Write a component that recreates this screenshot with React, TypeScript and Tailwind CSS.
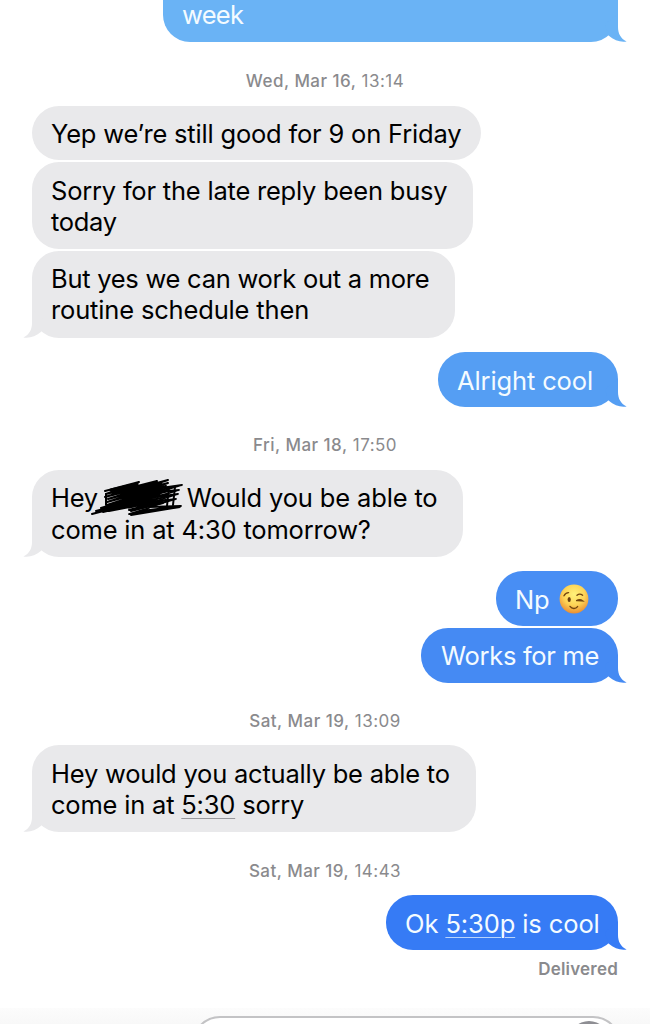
import { ReactNode } from 'react'
import clsx from 'clsx'

interface BubbleProps {
  sent?: boolean
  tail?: boolean
  className: string
  children: ReactNode
}

function Tail({ sent }: { sent?: boolean }) {
  return (
    <svg
      viewBox="0 0 30 28"
      className={clsx(
        'absolute bottom-0 h-[28px] w-[30px]',
        sent ? '-right-[9px]' : '-left-[9px] -scale-x-100'
      )}
    >
      <path
        d="M21 0V13C21 19.5 23.6 24.6 29.6 27.5C24 28.4 17.5 27 11.5 21.6L8 10Z"
        fill="currentColor"
      />
    </svg>
  )
}

function Bubble({ sent, tail, className, children }: BubbleProps) {
  return (
    <div
      className={clsx(
        'relative shrink-0 rounded-[27px] bg-current pl-[19px]',
        sent ? 'self-end' : 'self-start text-[#e9e9eb]',
        className
      )}
    >
      {tail && <Tail sent={sent} />}
      <div
        className={clsx(
          'relative whitespace-nowrap text-[25.5px] leading-[31.4px]',
          sent ? 'text-[#f4fbff]' : 'text-black'
        )}
      >
        {children}
      </div>
    </div>
  )
}

function Timestamp({ day, time, className }: { day: string; time: string; className: string }) {
  return (
    <div
      className={clsx(
        'shrink-0 text-center text-[17px] leading-[20px] tracking-[0.47px] text-[#8a8a8d]',
        className
      )}
    >
      <span className="font-medium">{day},</span> {time}
    </div>
  )
}

function Scribble() {
  return (
    <span className="relative inline-block h-[20px] w-[89px] align-baseline">
      <svg
        viewBox="0 0 96 42"
        className="absolute -left-[9px] -top-[5px] h-[42px] w-[96px]"
        fill="none"
        stroke="#000"
        strokeWidth="2"
        strokeLinecap="round"
        strokeLinejoin="round"
      >
        <path d="M16 14L50 5L17 17L68 4L16 20L79 3L19 22L79 6L18 25L77 9L18 28L79 11L12 31L79 14L7 34L78 17L3 37L30 30L14 35L76 20L20 34L77 23L40 33L74 26L42 34L66 28" />
        <path d="M22 13L48 7L24 17L62 7L32 20L72 7L38 23L74 10L40 26L74 14L36 28L70 18L34 27L62 12L40 30L66 23" strokeWidth="3.2" />
        <path d="M72 11L93 8L70 15L90 13L68 20L89 17L64 25L87 22L60 30L92 29L52 34L91 30L42 38L66 33L40 37L60 31" strokeWidth="1.8" />
        <path d="M80 10L78 29M86 10L84 28M17 17V28" />
      </svg>
    </span>
  )
}

function WinkEmoji() {
  return (
    <svg viewBox="0 0 30 30" className="ml-[10px] inline-block size-[30px] align-[-5px]">
      <defs>
        <radialGradient id="face" cx="0.5" cy="0.34" r="0.68">
          <stop offset="0" stopColor="#fff27a" />
          <stop offset="0.55" stopColor="#fdd356" />
          <stop offset="1" stopColor="#e98a30" />
        </radialGradient>
      </defs>
      <circle cx="15" cy="15" r="14.4" fill="url(#face)" />
      <ellipse cx="10.2" cy="15.4" rx="1.6" ry="2.5" fill="#6b3f12" />
      <g fill="none" stroke="#74460f" strokeWidth="1.4" strokeLinecap="round">
        <path d="M5 11.8C6 9.6 7.6 8.6 9.6 8.6" />
        <path d="M18 11.2C19.8 9.8 22 10 23.6 11.2" />
        <path d="M17.6 16.6C19.4 15.4 21.8 15.4 23.6 16.8L18.6 16.5" />
        <path d="M11 22.4C13 25 16.6 25.2 18.6 22.6" />
      </g>
    </svg>
  )
}

export default function App() {
  return (
    <div className="flex h-[1024px] w-[650px] flex-col overflow-hidden bg-white font-['Inter','Liberation_Sans',sans-serif]">
      <main className="flex h-[1008px] shrink-0 flex-col px-[32px]">
        <Bubble sent tail className="-mt-[45px] h-[87px] w-[455px] pt-[44px] text-[#6ab3f5]">
          <span className="block tracking-[-0.7px]">week</span>
        </Bubble>

        <Timestamp day="Wed, Mar 16" time="13:14" className="mt-[28.5px]" />
        <Bubble className="mt-[15px] h-[54.5px] w-[449px] pt-[12px]">
          <span className="block tracking-[-0.19px]">Yep we’re still good for 9 on Friday</span>
        </Bubble>
        <Bubble className="mt-[2px] h-[87px] w-[441px] pt-[12.5px]">
          <span className="block tracking-[-0.21px]">Sorry for the late reply been busy</span>
          <span className="block tracking-[-0.3px]">today</span>
        </Bubble>
        <Bubble tail className="mt-[1.5px] h-[87px] w-[423px] pt-[12.5px]">
          <span className="block tracking-[-0.27px]">But yes we can work out a more</span>
          <span className="block tracking-[-0.16px]">routine schedule then</span>
        </Bubble>
        <Bubble sent tail className="mt-[14.5px] h-[55px] w-[180px] pt-[12.5px] text-[#559ef3]">
          <span className="block tracking-[-0.13px]">Alright cool</span>
        </Bubble>

        <Timestamp day="Fri, Mar 18" time="17:50" className="mt-[28px]" />
        <Bubble tail className="mt-[15px] h-[87px] w-[431px] pt-[12.3px]">
          <span className="flex h-[31.4px]">
            <span className="tracking-[-0.3px]">Hey</span>
            <Scribble />
            <span className="tracking-[-0.15px]">Would you be able to</span>
          </span>
          <span className="block tracking-[-0.18px]">come in at 4:30 tomorrow?</span>
        </Bubble>
        <Bubble sent className="mt-[14px] h-[55px] w-[122px] pt-[12.5px] text-[#488ef4]">
          <span className="block tracking-[-0.3px]">
            Np
            <WinkEmoji />
          </span>
        </Bubble>
        <Bubble sent tail className="mt-[1.5px] h-[55px] w-[197px] pl-[20px] pt-[12.5px] text-[#458af3]">
          <span className="block tracking-[-0.3px]">Works for me</span>
        </Bubble>

        <Timestamp day="Sat, Mar 19" time="13:09" className="mt-[28px]" />
        <Bubble tail className="mt-[14.5px] h-[87px] w-[444px] pt-[13px]">
          <span className="block tracking-[-0.21px]">Hey would you actually be able to</span>
          <span className="block tracking-[-0.2px]">
            come in at{' '}
            <span className="underline decoration-[#98989c] decoration-1 underline-offset-[4px] [text-decoration-skip-ink:none]">
              5:30
            </span>{' '}
            sorry
          </span>
        </Bubble>

        <Timestamp day="Sat, Mar 19" time="14:43" className="mt-[28.5px]" />
        <Bubble sent tail className="mt-[14.5px] h-[55px] w-[232px] pt-[13px] text-[#367bf5]">
          <span className="block tracking-[-0.1px]">
            Ok{' '}
            <span className="underline decoration-[#b8d4fb] decoration-1 underline-offset-[4px]">5:30p</span>{' '}
            is cool
          </span>
        </Bubble>
        <div className="mt-[8.5px] shrink-0 self-end text-[17px] font-semibold leading-[20px] tracking-[0.2px] text-[#8a8a8d]">
          Delivered
        </div>
      </main>

      <footer className="flex h-[16px] shrink-0 justify-end overflow-hidden bg-linear-to-b from-[#fcfcfc] to-[#f8f8f8] pr-[29px] pt-[7.5px]">
        <div className="flex h-[56px] w-[429px] shrink-0 justify-end rounded-[28px] border-2 border-[#c3c3c5] bg-white pr-[10px] pt-[3px]">
          <div className="size-[40px] shrink-0 rounded-full bg-[#8e8e93]" />
        </div>
      </footer>
    </div>
  )
}
